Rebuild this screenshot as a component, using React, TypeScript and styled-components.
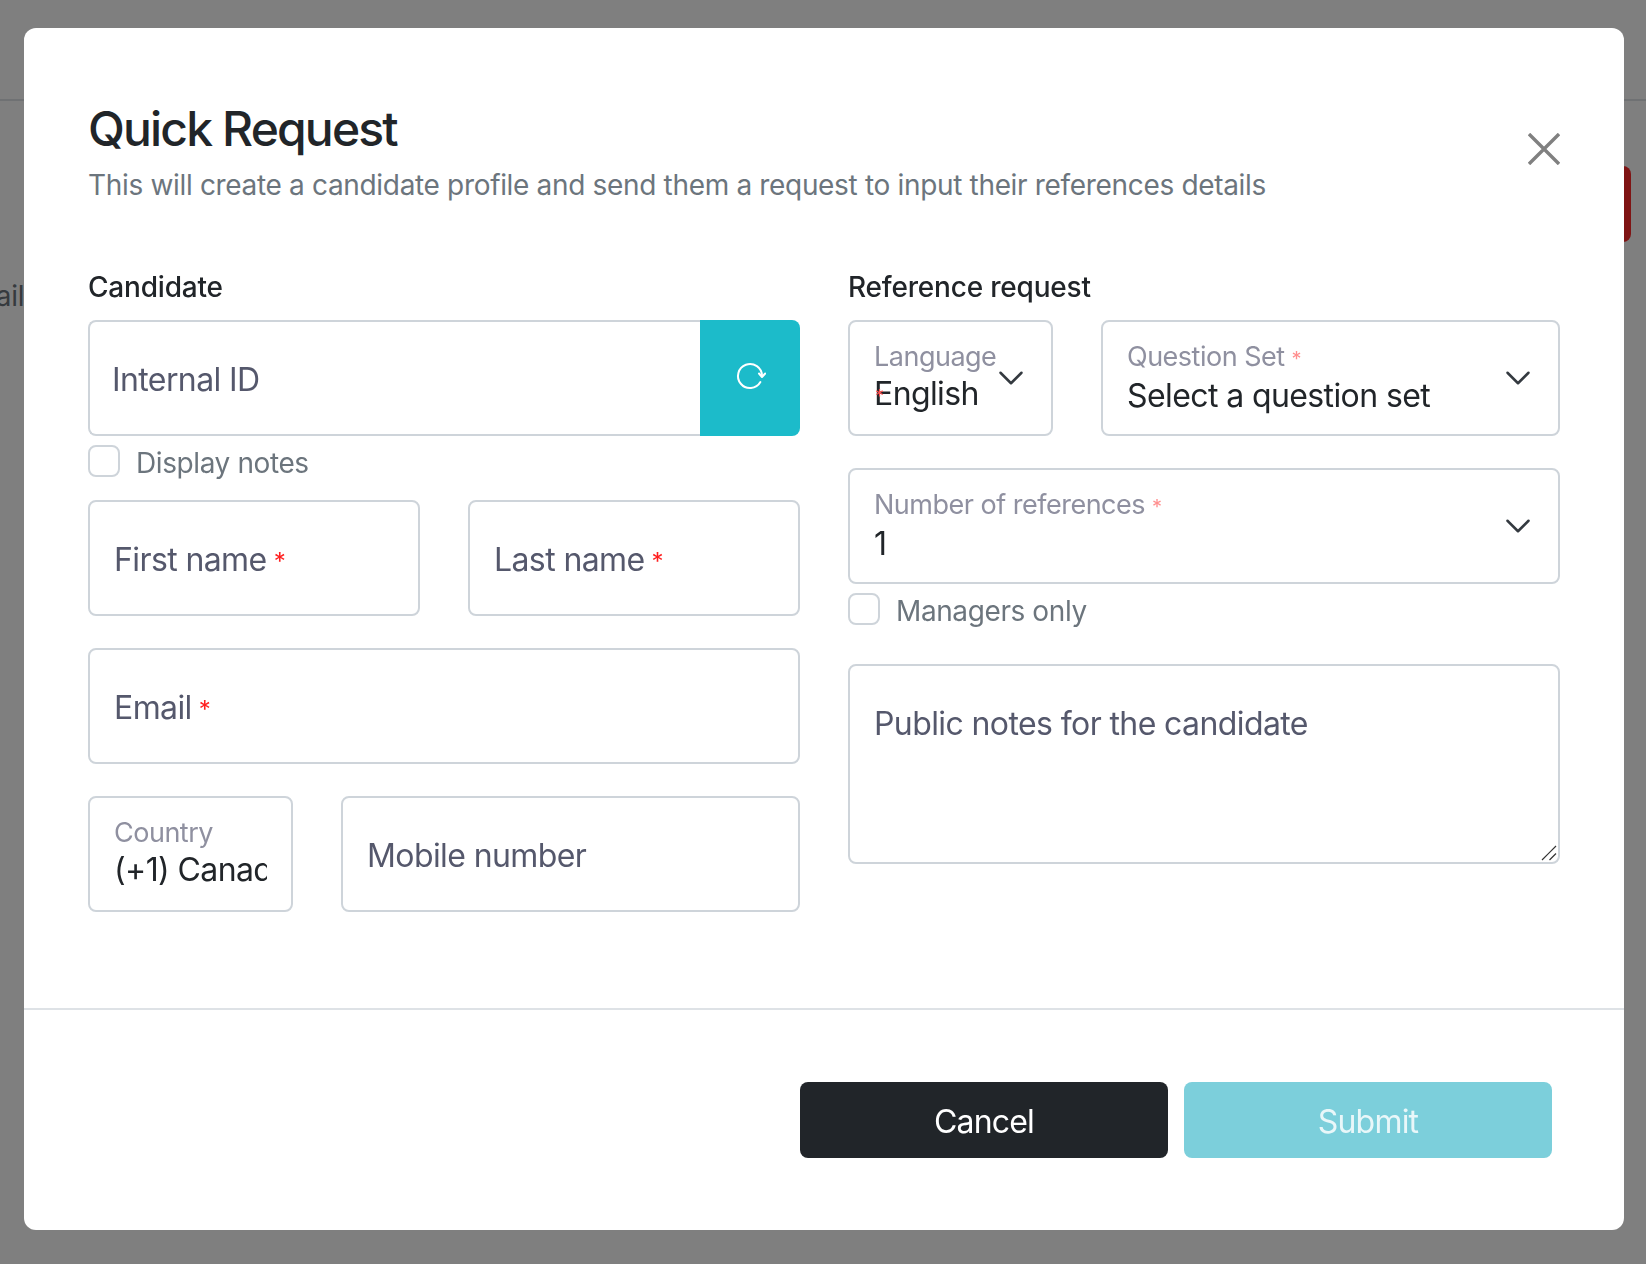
import styled, { createGlobalStyle } from 'styled-components';

const GlobalStyle = createGlobalStyle`
  html, body {
    margin: 0;
    padding: 0;
    height: 100%;
    overflow: hidden;
    background: #fff;
    font-family: Inter, "Liberation Sans", sans-serif;
  }
  * {
    box-sizing: border-box;
  }
`;

export default function App() {
  return (
    <>
      <GlobalStyle />
      <PageBehind>
        <PageHeader />
        <PageAction />
        <PageText>Email</PageText>
      </PageBehind>
      <Backdrop>
        <Modal>
          <ModalHeader>
            <div>
              <Title>Quick Request</Title>
              <Subtitle>This will create a candidate profile and send them a request to input their references details</Subtitle>
            </div>
            <CloseButton aria-label="Close">
              <svg width="32" height="32" viewBox="0 0 32 32" fill="none" stroke="#808080" strokeWidth="3.4">
                <path d="M1 1l30 30M31 1L1 31" />
              </svg>
            </CloseButton>
          </ModalHeader>

          <Columns>
            <Column>
              <SectionTitle>Candidate</SectionTitle>
              <InputGroup>
                <GroupField>Internal ID</GroupField>
                <RefreshButton aria-label="Generate">
                  <svg width="32" height="32" viewBox="0 0 32 32" fill="none" stroke="#fff" strokeWidth="2" strokeLinecap="round" strokeLinejoin="round">
                    <path d="M28 16A12 12 0 1 0 26.4 22" />
                    <path d="M25 13.5l3 3.5 3.2-3.5" />
                  </svg>
                </RefreshButton>
              </InputGroup>
              <CheckRow>
                <CheckBox type="checkbox" />
                Display notes
              </CheckRow>
              <FieldRow $columns="1fr 1fr" $top={23}>
                <Field>First name<Star>*</Star></Field>
                <Field>Last name<Star>*</Star></Field>
              </FieldRow>
              <FieldRow $columns="1fr" $top={32}>
                <Field>Email<Star>*</Star></Field>
              </FieldRow>
              <FieldRow $columns="205px 1fr" $top={32}>
                <SelectBox>
                  <FloatLabel>Country</FloatLabel>
                  <SelectValue>(+1) Canada</SelectValue>
                </SelectBox>
                <Field>Mobile number</Field>
              </FieldRow>
            </Column>

            <Column>
              <SectionTitle>Reference request</SectionTitle>
              <FieldRow $columns="205px 1fr" $top={0}>
                <SelectBox>
                  <FloatLabel>Language</FloatLabel>
                  <SelectValue>English</SelectValue>
                  <StrayStar>*</StrayStar>
                  <Chevron />
                </SelectBox>
                <SelectBox>
                  <FloatLabel>Question Set<FaintStar>*</FaintStar></FloatLabel>
                  <SelectValue>Select a question set</SelectValue>
                  <Chevron />
                </SelectBox>
              </FieldRow>
              <FieldRow $columns="1fr" $top={32}>
                <SelectBox>
                  <FloatLabel>Number of references<FaintStar>*</FaintStar></FloatLabel>
                  <SelectValue>1</SelectValue>
                  <Chevron />
                </SelectBox>
              </FieldRow>
              <CheckRow>
                <CheckBox type="checkbox" />
                Managers only
              </CheckRow>
              <NotesWrap>
                <Notes placeholder="Public notes for the candidate" />
                <Grip width="16" height="16" viewBox="0 0 16 16" fill="none" stroke="#333" strokeWidth="1.2">
                  <path d="M1 15L15 1M8.5 15L15 8.5" />
                </Grip>
              </NotesWrap>
            </Column>
          </Columns>

          <Footer>
            <FooterButton $variant="dark">Cancel</FooterButton>
            <FooterButton $variant="disabled">Submit</FooterButton>
          </Footer>
        </Modal>
      </Backdrop>
    </>
  );
}

function Chevron() {
  return (
    <ChevronIcon width="28" height="28" viewBox="0 0 16 16" fill="none" stroke="#343a40" strokeWidth="1.45" strokeLinecap="round" strokeLinejoin="round">
      <path d="M2 5l6 6 6-6" />
    </ChevronIcon>
  );
}

const PageBehind = styled.div`
  height: 1264px;
  overflow: hidden;
`;

const PageHeader = styled.div`
  height: 101px;
  border-bottom: 2px solid #dee2e6;
`;

const PageAction = styled.div`
  width: 100px;
  height: 76px;
  margin: 65px 15px 0 auto;
  background: #fe2828;
  border-radius: 8px;
`;

const PageText = styled.div`
  margin: 37px 0 0 -45px;
  font-size: 28px;
  line-height: 34px;
  letter-spacing: -0.3px;
  color: #6c757d;
`;

const Backdrop = styled.div`
  position: fixed;
  inset: 0;
  background: rgba(0, 0, 0, 0.5);
`;

const Modal = styled.div`
  width: 1600px;
  height: 1202px;
  margin: 28px 0 0 24px;
  background: #fff;
  border-radius: 12px;
  display: flex;
  flex-direction: column;
`;

const ModalHeader = styled.div`
  display: flex;
  justify-content: space-between;
  align-items: flex-start;
  padding: 73px 64px 0;
  height: 238px;
`;

const Title = styled.h2`
  margin: 0;
  font-size: 48px;
  line-height: 56px;
  font-weight: 500;
  letter-spacing: -1.85px;
  color: #212529;
`;

const Subtitle = styled.p`
  margin: 10px 0 0;
  font-size: 28px;
  line-height: 36px;
  letter-spacing: -0.33px;
  color: #6c757d;
`;

const CloseButton = styled.button`
  width: 32px;
  height: 32px;
  margin-top: 32px;
  padding: 0;
  border: 0;
  background: none;
  display: flex;
`;

const Columns = styled.div`
  display: grid;
  grid-template-columns: 712px 712px;
  column-gap: 48px;
  padding: 0 64px;
  height: 742px;
`;

const Column = styled.div`
  display: flex;
  flex-direction: column;
`;

const SectionTitle = styled.h3`
  margin: 4px 0 16px;
  height: 34px;
  font-size: 28px;
  line-height: 34px;
  font-weight: 500;
  letter-spacing: -0.2px;
  color: #212529;
`;

const InputGroup = styled.div`
  display: flex;
  height: 116px;
`;

const Field = styled.label`
  display: flex;
  align-items: center;
  height: 116px;
  padding: 2px 24px 0;
  border: 2px solid #ced4da;
  border-radius: 8px;
  background: #fff;
  font-size: 32px;
  letter-spacing: -0.6px;
  color: #55586c;
`;

const GroupField = styled(Field)`
  flex: 1;
  padding-left: 22px;
  border-right: 0;
  border-radius: 8px 0 0 8px;
`;

const RefreshButton = styled.button`
  width: 100px;
  padding: 0 0 4px;
  border: 0;
  border-radius: 0 8px 8px 0;
  background: #1cbbca;
  display: flex;
  align-items: center;
  justify-content: center;
`;

const Star = styled.span`
  margin-left: 7px;
  padding-top: 5px;
  font-size: 24px;
  color: #ff2020;
`;

const FaintStar = styled.span`
  margin-left: 7px;
  font-size: 20px;
  color: #ff8f8f;
`;

const StrayStar = styled.span`
  position: absolute;
  left: 25px;
  top: 64px;
  font-size: 18px;
  color: #ff5050;
`;

const CheckRow = styled.label`
  display: flex;
  align-items: center;
  gap: 16px;
  height: 32px;
  margin-top: 9px;
  padding-top: 3px;
  font-size: 28px;
  letter-spacing: -0.4px;
  color: #6c757d;
`;

const CheckBox = styled.input`
  appearance: none;
  width: 32px;
  height: 32px;
  margin: -3px 0 0;
  border: 2px solid #ced4da;
  border-radius: 8px;
  background: #fff;
`;

const FieldRow = styled.div<{ $columns: string; $top: number }>`
  display: grid;
  grid-template-columns: ${(p) => p.$columns};
  column-gap: 48px;
  margin-top: ${(p) => p.$top}px;
`;

const SelectBox = styled.div`
  position: relative;
  height: 116px;
  padding: 18px 24px 0;
  border: 2px solid #ced4da;
  border-radius: 8px;
  background: #fff;
  overflow: hidden;
`;

const FloatLabel = styled.div`
  font-size: 27px;
  line-height: 34px;
  letter-spacing: -0.5px;
  color: #8f90a0;
  white-space: nowrap;
`;

const SelectValue = styled.div`
  font-size: 32px;
  line-height: 40px;
  letter-spacing: -0.6px;
  color: #212529;
  white-space: nowrap;
  overflow: hidden;
`;

const ChevronIcon = styled.svg`
  position: absolute;
  right: 26px;
  top: 42px;
`;

const NotesWrap = styled.div`
  position: relative;
  height: 200px;
  margin-top: 39px;
`;

const Notes = styled.textarea`
  display: block;
  width: 100%;
  height: 100%;
  padding: 38px 24px;
  border: 2px solid #ced4da;
  border-radius: 8px;
  outline: none;
  resize: none;
  font-family: inherit;
  font-size: 32px;
  line-height: 40px;
  letter-spacing: -0.6px;
  &::placeholder {
    color: #55586c;
    opacity: 1;
  }
`;

const Grip = styled.svg`
  position: absolute;
  right: 3px;
  bottom: 3px;
`;

const Footer = styled.div`
  flex: 1;
  display: flex;
  justify-content: flex-end;
  gap: 16px;
  padding: 72px 72px 0 0;
  border-top: 2px solid #dee2e6;
`;

const FooterButton = styled.button<{ $variant: 'dark' | 'disabled' }>`
  width: 368px;
  height: 76px;
  padding: 2px 0 0;
  border: 0;
  border-radius: 8px;
  font-family: inherit;
  font-size: 32px;
  letter-spacing: -0.8px;
  color: ${(p) => (p.$variant === 'dark' ? '#fff' : '#e9f7f9')};
  background: ${(p) => (p.$variant === 'dark' ? '#212529' : '#7ccfdb')};
`;
